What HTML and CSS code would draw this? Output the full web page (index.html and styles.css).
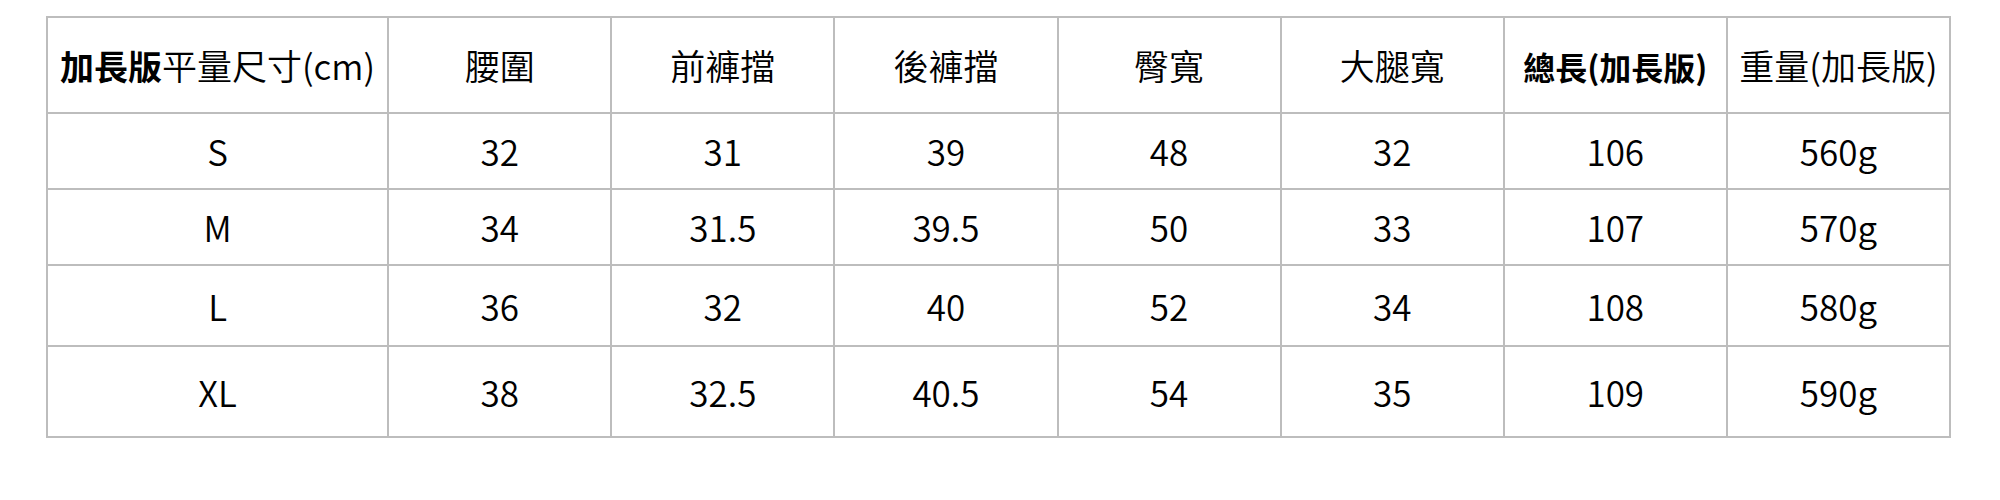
FILE: index.html
```html
<!DOCTYPE html>
<html lang="zh-Hant">
<head>
<meta charset="utf-8">
<title>加長版平量尺寸</title>
<link rel="stylesheet" href="styles.css">
</head>
<body>
<table class="size-table">
  <colgroup>
    <col class="col-first">
    <col class="col-n"><col class="col-n"><col class="col-n"><col class="col-n">
    <col class="col-n"><col class="col-n"><col class="col-n">
  </colgroup>
  <tr class="row-head">
    <td><b class="em-lead">加長版</b>平量尺寸(cm)</td>
    <td>腰圍</td>
    <td>前褲擋</td>
    <td>後褲擋</td>
    <td>臀寬</td>
    <td>大腿寬</td>
    <td><b class="em-total">總長(加長版)</b></td>
    <td>重量(加長版)</td>
  </tr>
  <tr class="row-s">
    <td>S</td><td>32</td><td>31</td><td>39</td><td>48</td><td>32</td><td>106</td><td>560g</td>
  </tr>
  <tr class="row-m">
    <td>M</td><td>34</td><td>31.5</td><td>39.5</td><td>50</td><td>33</td><td>107</td><td>570g</td>
  </tr>
  <tr class="row-l">
    <td>L</td><td>36</td><td>32</td><td>40</td><td>52</td><td>34</td><td>108</td><td>580g</td>
  </tr>
  <tr class="row-xl">
    <td>XL</td><td>38</td><td>32.5</td><td>40.5</td><td>54</td><td>35</td><td>109</td><td>590g</td>
  </tr>
</table>
</body>
</html>
```

FILE: styles.css
```css
html, body {
  margin: 0;
  padding: 0;
  background: #ffffff;
}

body {
  padding: 16px 0 0 46px;
  font-family: "Noto Sans CJK TC", "Noto Sans CJK SC", "Noto Sans", sans-serif;
  color: #000000;
}

.size-table {
  border-collapse: collapse;
  table-layout: fixed;
  width: 1905px;
  font-size: 35px;
  font-weight: 350;
}

.col-first { width: 341px; }
.col-n { width: 223px; }

.size-table td {
  border: 2px solid #bdbdbd;
  padding: 0;
  text-align: center;
  vertical-align: middle;
  white-space: nowrap;
  line-height: 1.2;
}

.size-table b {
  font-weight: 700;
}

.em-lead { font-size: 34px; }
.em-total { font-size: 32px; }

.row-head { height: 96px; }
.row-s { height: 76px; }
.row-m { height: 76px; }
.row-l { height: 81px; }
.row-xl { height: 91px; }
```
